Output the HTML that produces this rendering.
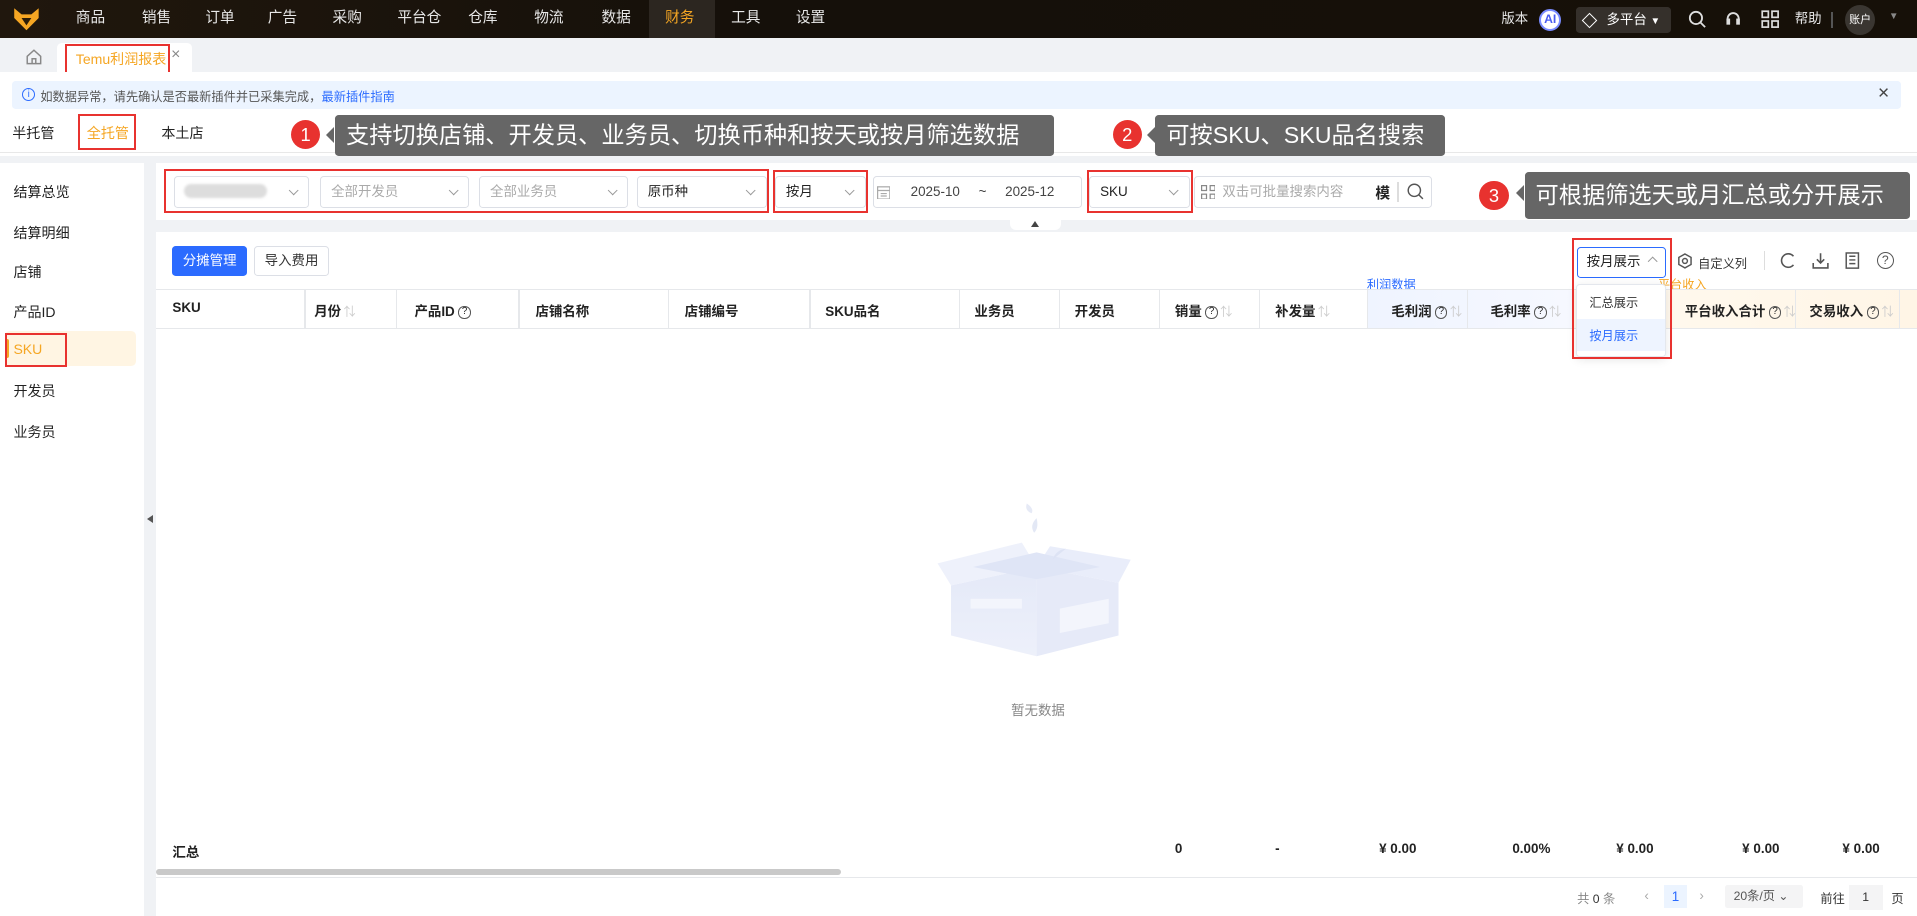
<!DOCTYPE html>
<html><head><meta charset="utf-8"><style>
*{box-sizing:border-box;margin:0;padding:0}
html,body{width:1917px;height:916px;overflow:hidden;background:#f0f2f5}
body{font-family:"Liberation Sans","Noto Sans CJK SC",sans-serif;color:#333}
#w{position:absolute;left:0;top:0;width:1568px;height:749px;zoom:1.22258;background:#f0f2f5;overflow:hidden}
.a{position:absolute;white-space:nowrap}
.nav{left:0;top:0;width:1568px;height:31px;background:linear-gradient(90deg,#20170d,#15100a 40%,#161008)}
.ni{top:0;height:31px;line-height:31px;font-size:12px;color:#e8e8e8}
.sel{height:26px;border:1px solid #dcdfe6;border-radius:3px;background:#fff;font-size:11px;line-height:24px;padding-left:8px;color:#aaa}
.sel .ch{position:absolute;right:9px;top:8px;width:6px;height:6px;border-right:1px solid #999;border-bottom:1px solid #999;transform:rotate(45deg)}
.rb{border:2px solid #e8322f}
.side{font-size:11.5px;color:#222;left:11px}
.th{font-size:11px;font-weight:bold;color:#222;top:245px}
.q{display:inline-block;width:10px;height:10px;border:1px solid #555;border-radius:50%;font-size:8px;line-height:8px;text-align:center;font-weight:normal;vertical-align:1px;margin-left:3px}
.so{color:#ccc;font-weight:normal;font-size:10px;margin-left:2px}
.vl{top:237px;width:1px;height:32px;background:#e6e8eb}
.tip{background:#666;color:#fff;font-size:19px;line-height:34px;padding-left:9px;border-radius:3px}
.tip:before{content:"";position:absolute;left:-7px;top:10px;border-right:7px solid #666;border-top:7px solid transparent;border-bottom:7px solid transparent}
.num{width:24px;height:24px;border-radius:50%;background:#e8322f;color:#fff;font-size:15px;text-align:center;line-height:24px}
.sum{top:688px;font-size:11px;font-weight:bold;color:#222}
</style></head><body><div id="w">
<div class="a nav"></div>
<svg class="a" style="left:11px;top:6px" width="22" height="20" viewBox="0 0 22 20"><path d="M1 1 L7 6 L15 6 L21 1 L21 9 L11 19 L1 9Z" fill="#f5a623"/><path d="M7 9 L11 15 L15 9Z" fill="#2a1c08"/></svg>
<div class="a ni" style="left:62px">商品</div><div class="a ni" style="left:116px">销售</div><div class="a ni" style="left:168px">订单</div><div class="a ni" style="left:219px">广告</div><div class="a ni" style="left:272px">采购</div><div class="a ni" style="left:325px">平台仓</div><div class="a ni" style="left:383px">仓库</div><div class="a ni" style="left:437px">物流</div><div class="a ni" style="left:492px">数据</div>
<div class="a" style="left:531px;top:0;width:54px;height:31px;background:#2c2620"></div>
<div class="a ni" style="left:544px;color:#f5a623">财务</div><div class="a ni" style="left:598px">工具</div><div class="a ni" style="left:651px">设置</div>
<div class="a ni" style="left:1228px;font-size:11px">版本</div>
<div class="a" style="left:1259px;top:7px;width:18px;height:18px;border-radius:50%;background:#fff;border:2px solid #7a8cff;font-size:10px;font-weight:bold;color:#4a5cf0;text-align:center;line-height:14px">AI</div>
<div class="a" style="left:1289px;top:6px;width:78px;height:21px;background:#35302b;border-radius:3px;color:#fff;font-size:11px;line-height:21px;padding-left:25px">多平台 <span style="font-size:8px">▼</span></div>
<div class="a" style="left:1296px;top:12px;width:9px;height:9px;border:1.5px solid #fff;transform:rotate(45deg)"></div>
<svg class="a" style="left:1381px;top:8px" width="15" height="15"><circle cx="6.5" cy="6.5" r="5" stroke="#ddd" stroke-width="1.5" fill="none"/><path d="M10 10 L14 14" stroke="#ddd" stroke-width="1.5"/></svg>
<svg class="a" style="left:1410px;top:8px" width="15" height="15"><path d="M3 9 V7 A4.5 4.5 0 0 1 12 7 V9" stroke="#ddd" stroke-width="1.5" fill="none"/><rect x="2" y="7" width="3" height="5" fill="#ddd"/><rect x="10" y="7" width="3" height="5" fill="#ddd"/></svg>
<svg class="a" style="left:1440px;top:8px" width="15" height="15" fill="none" stroke="#ddd" stroke-width="1.4"><rect x="1" y="1" width="5" height="5"/><rect x="9" y="1" width="5" height="5"/><rect x="1" y="9" width="5" height="5"/><rect x="9" y="9" width="5" height="5"/></svg>
<div class="a ni" style="left:1468px;font-size:11px">帮助</div>
<div class="a" style="left:1498px;top:10px;width:1px;height:13px;background:#555"></div>
<div class="a" style="left:1509px;top:4px;width:25px;height:25px;border-radius:50%;background:#3a3631;color:#fff;font-size:9px;text-align:center;line-height:25px">账户</div>
<div class="a" style="left:1545px;top:9px;color:#888;font-size:8px">▼</div>
<div class="a" style="left:0;top:31px;width:1568px;height:28px;background:#f0f2f5"></div>
<svg class="a" style="left:21px;top:40px" width="13" height="13" fill="none" stroke="#888" stroke-width="1.2"><path d="M1 6 L6.5 1 L12 6 V12 H1Z"/><path d="M5 12 V8 H8 V12"/></svg>
<div class="a" style="left:47px;top:35px;width:110px;height:24px;background:#fff;border-radius:4px 4px 0 0"></div>
<div class="a" style="left:62px;top:40px;font-size:11.5px;color:#f5a623">Temu利润报表</div>
<div class="a" style="left:140px;top:38px;font-size:13px;color:#888">×</div>
<div class="a rb" style="left:53px;top:36px;width:86px;height:25px"></div>
<div class="a" style="left:0;top:59px;width:1568px;height:69px;background:#fff"></div>
<div class="a" style="left:10px;top:66px;width:1545px;height:23px;background:#ecf4ff;border-radius:3px"></div>
<div class="a" style="left:18px;top:72px;width:11px;height:11px;border:1px solid #2b6bff;border-radius:50%;font-size:8px;color:#2b6bff;text-align:center;line-height:9px">i</div>
<div class="a" style="left:33px;top:71px;font-size:10px;color:#555">如数据异常，请先确认是否最新插件并已采集完成，</div>
<div class="a" style="left:263px;top:71px;font-size:10px;color:#2b6bff">最新插件指南</div>
<div class="a" style="left:1536px;top:67px;font-size:16px;color:#444">×</div>
<div class="a" style="left:10px;top:101px;font-size:11.5px;color:#222">半托管</div>
<div class="a" style="left:71px;top:101px;font-size:11.5px;color:#f5a623">全托管</div>
<div class="a" style="left:70px;top:121px;width:36px;height:2px;background:#f5a623"></div>
<div class="a" style="left:132px;top:101px;font-size:11.5px;color:#222">本土店</div>
<div class="a rb" style="left:64px;top:93px;width:47px;height:30px"></div>
<div class="a" style="left:0;top:124px;width:1568px;height:1px;background:#e8e8e8"></div>
<div class="a" style="left:0;top:133px;width:118px;height:616px;background:#fff"></div>
<div class="a side" style="top:149px">结算总览</div><div class="a side" style="top:182px">结算明细</div><div class="a side" style="top:214px">店铺</div><div class="a side" style="top:247px">产品ID</div>
<div class="a" style="left:4px;top:271px;width:107px;height:28px;background:#fff5e3;border-radius:4px"></div>
<div class="a" style="left:4px;top:277px;width:3px;height:16px;background:#f5a623;border-radius:2px"></div>
<div class="a side" style="top:279px;color:#f5a623">SKU</div>
<div class="a rb" style="left:4px;top:272px;width:51px;height:28px"></div>
<div class="a side" style="top:312px">开发员</div><div class="a side" style="top:345px">业务员</div>
<div class="a" style="left:118px;top:405px;width:10px;height:44px;background:#f0f2f5"></div>
<div class="a" style="left:120px;top:421px;border-right:5px solid #555;border-top:4px solid transparent;border-bottom:4px solid transparent"></div>
<div class="a" style="left:128px;top:133px;width:1440px;height:47px;background:#fff"></div>
<div class="a sel" style="left:142px;top:144px;width:111px"><span style="display:inline-block;width:68px;height:12px;background:#ddd;vertical-align:-2px;filter:blur(1px);border-radius:6px"></span><i class="ch"></i></div>
<div class="a sel" style="left:262px;top:144px;width:122px">全部开发员<i class="ch"></i></div>
<div class="a sel" style="left:392px;top:144px;width:122px">全部业务员<i class="ch"></i></div>
<div class="a sel" style="left:521px;top:144px;width:106px;color:#222">原币种<i class="ch"></i></div>
<div class="a sel" style="left:634px;top:144px;width:74px;color:#222">按月<i class="ch"></i></div>
<div class="a sel" style="left:714px;top:144px;width:171px;color:#444;padding-left:30px">2025-10 &nbsp;&nbsp;&nbsp;&nbsp;~&nbsp;&nbsp;&nbsp;&nbsp; 2025-12</div>
<svg class="a" style="left:717px;top:151px" width="11" height="12" fill="none" stroke="#aaa"><rect x="0.5" y="1.5" width="10" height="10"/><path d="M0.5 4.5 H10.5 M3 7 H8 M3 9 H8"/></svg>
<div class="a sel" style="left:891px;top:144px;width:82px;color:#222">SKU<i class="ch"></i></div>
<div class="a sel" style="left:977px;top:144px;width:194px;padding-left:22px">双击可批量搜索内容</div>
<svg class="a" style="left:982px;top:151px" width="12" height="12" fill="none" stroke="#888"><rect x="0.5" y="0.5" width="4" height="4"/><rect x="7.5" y="0.5" width="4" height="4"/><rect x="0.5" y="7.5" width="4" height="4"/><rect x="7.5" y="7.5" width="4" height="4"/></svg>
<div class="a" style="left:1125px;top:149px;font-size:12px;font-weight:bold;color:#222">模</div>
<div class="a" style="left:1143px;top:149px;width:1px;height:16px;background:#ddd"></div>
<svg class="a" style="left:1151px;top:150px" width="14" height="14" fill="none" stroke="#555" stroke-width="1.2"><circle cx="6" cy="6" r="5"/><path d="M9.5 9.5 L13 13"/></svg>
<div class="a rb" style="left:134px;top:138px;width:495px;height:36px"></div>
<div class="a rb" style="left:632px;top:139px;width:78px;height:35px"></div>
<div class="a rb" style="left:889px;top:139px;width:87px;height:35px"></div>
<div class="a" style="left:826px;top:179px;width:42px;height:9px;background:#fff;border-radius:0 0 5px 5px"></div>
<div class="a" style="left:843px;top:181px;border-bottom:5px solid #444;border-left:4px solid transparent;border-right:4px solid transparent"></div>
<div class="a" style="left:128px;top:190px;width:1440px;height:559px;background:#fff"></div>
<div class="a" style="left:141px;top:201px;width:61px;height:25px;background:#2b6bff;border-radius:3px;color:#fff;font-size:11px;text-align:center;line-height:25px">分摊管理</div>
<div class="a" style="left:208px;top:201px;width:61px;height:25px;border:1px solid #dcdfe6;border-radius:3px;color:#333;font-size:11px;text-align:center;line-height:23px">导入费用</div>
<div class="a" style="left:1290px;top:202px;width:73px;height:25px;border:1px solid #2b6bff;border-radius:3px;font-size:11px;line-height:23px;padding-left:7px;color:#222">按月展示</div>
<div class="a" style="left:1349px;top:211px;width:6px;height:6px;border-left:1px solid #999;border-top:1px solid #999;transform:rotate(45deg)"></div>
<svg class="a" style="left:1372px;top:207px" width="13" height="13" fill="none" stroke="#555" stroke-width="1.2"><path d="M6.5 0.8 L11.5 3.6 V9.4 L6.5 12.2 L1.5 9.4 V3.6Z"/><circle cx="6.5" cy="6.5" r="2"/></svg>
<div class="a" style="left:1389px;top:208px;font-size:10px;color:#333">自定义列</div>
<div class="a" style="left:1443px;top:205px;width:1px;height:16px;background:#ddd"></div>
<svg class="a" style="left:1456px;top:206px" width="13" height="14" fill="none" stroke="#555" stroke-width="1.3"><path d="M11 3.5 A5.5 5.5 0 1 0 11 10.5"/></svg>
<svg class="a" style="left:1482px;top:206px" width="14" height="14" fill="none" stroke="#555" stroke-width="1.3"><path d="M7 1 V9 M4 6 L7 9 L10 6 M1 9 V13 H13 V9"/></svg>
<svg class="a" style="left:1509px;top:206px" width="12" height="14" fill="none" stroke="#555" stroke-width="1.2"><rect x="1" y="0.8" width="10" height="12.4"/><path d="M3.5 3.5 H8.5 M3.5 6.5 H8.5 M3.5 9.5 H8.5"/></svg>
<div class="a" style="left:1535px;top:206px;width:14px;height:14px;border:1.3px solid #555;border-radius:50%;font-size:10px;text-align:center;line-height:12px;color:#555">?</div>
<div class="a" style="left:1118px;top:225px;font-size:10px;color:#2b6bff">利润数据</div>
<div class="a" style="left:1356px;top:225px;font-size:10px;color:#f5a623">平台收入</div>
<div class="a" style="left:128px;top:236px;width:1440px;height:1px;background:#e6e8eb"></div>
<div class="a" style="left:1118px;top:237px;width:168px;height:32px;background:linear-gradient(90deg,#eff4ff,#f6f8ff)"></div>
<div class="a" style="left:1286px;top:237px;width:282px;height:32px;background:linear-gradient(90deg,#fffaf0,#fff5e6)"></div>
<div class="a" style="left:128px;top:268px;width:1440px;height:1px;background:#e6e8eb"></div>
<div class="a vl" style="left:249px"></div><div class="a vl" style="left:324px"></div><div class="a vl" style="left:424px"></div><div class="a vl" style="left:546px"></div><div class="a vl" style="left:662px"></div><div class="a vl" style="left:784px"></div><div class="a vl" style="left:866px"></div><div class="a vl" style="left:948px"></div><div class="a vl" style="left:1030px"></div><div class="a vl" style="left:1118px"></div><div class="a vl" style="left:1200px"></div><div class="a vl" style="left:1468px"></div><div class="a vl" style="left:1553px"></div>
<div class="a th" style="left:141px">SKU</div>
<div class="a th" style="left:257px">月份<span class="so">⇅</span></div>
<div class="a th" style="left:339px">产品ID<span class="q">?</span></div>
<div class="a th" style="left:438px">店铺名称</div>
<div class="a th" style="left:560px">店铺编号</div>
<div class="a th" style="left:675px">SKU品名</div>
<div class="a th" style="left:797px">业务员</div>
<div class="a th" style="left:879px">开发员</div>
<div class="a th" style="left:961px">销量<span class="q">?</span><span class="so">⇅</span></div>
<div class="a th" style="left:1043px">补发量<span class="so">⇅</span></div>
<div class="a th" style="left:1138px">毛利润<span class="q">?</span><span class="so">⇅</span></div>
<div class="a th" style="left:1219px">毛利率<span class="q">?</span><span class="so">⇅</span></div>
<div class="a th" style="left:1378px">平台收入合计<span class="q">?</span><span class="so">⇅</span></div>
<div class="a th" style="left:1480px">交易收入<span class="q">?</span><span class="so">⇅</span></div>
<div class="a" style="left:1289px;top:232px;width:74px;height:60px;background:#fff;border:1px solid #e4e7ed;border-radius:3px;box-shadow:0 2px 8px rgba(0,0,0,.1)"></div>
<div class="a" style="left:1300px;top:240px;font-size:10px;color:#333">汇总展示</div>
<div class="a" style="left:1290px;top:261px;width:72px;height:26px;background:#eef4ff"></div>
<div class="a" style="left:1300px;top:267px;font-size:10px;color:#2b6bff">按月展示</div>
<div class="a rb" style="left:1286px;top:195px;width:82px;height:99px"></div>
<svg class="a" style="left:760px;top:392px" width="180" height="160" viewBox="0 0 180 160">
<defs><linearGradient id="g" x1="0" y1="0" x2="0" y2="1"><stop offset="0" stop-color="#e4e9f8"/><stop offset="1" stop-color="#edf0fa"/></linearGradient></defs>
<path d="M18 87 L88 72 L88 145 L18 128Z" fill="url(#g)"/>
<path d="M88 72 L155 85 L155 128 L88 145Z" fill="#e6eaf8"/>
<path d="M18 87 L7 69 L76 52 L88 72Z" fill="#eef1fb"/>
<path d="M88 72 L99 55 L165 66 L155 85Z" fill="#e9edfa"/>
<path d="M36 72 L88 60 L140 72 L88 82Z" fill="#dfe5f6"/>
<rect x="34" y="98" width="42" height="8" fill="#f3f5fc"/>
<path d="M107 106 L147 98 L147 118 L107 126Z" fill="#f3f5fc"/>
<path d="M101 66 Q104 58 112 57 Q106 62 101 66Z" fill="#dde3f4"/>
<path d="M88 32 Q90 40 86 44 Q82 38 88 32Z" fill="#e3e8f5"/>
<path d="M80 20 Q86 24 84 28 Q78 26 80 20Z" fill="#e6eaf6"/>
</svg>
<div class="a" style="left:827px;top:572px;font-size:11px;color:#888">暂无数据</div>
<div class="a sum" style="left:141px">汇总</div>
<div class="a sum" style="left:961px">0</div>
<div class="a sum" style="left:1043px">-</div>
<div class="a sum" style="left:1128px">¥ 0.00</div>
<div class="a sum" style="left:1237px">0.00%</div>
<div class="a sum" style="left:1322px">¥ 0.00</div>
<div class="a sum" style="left:1425px">¥ 0.00</div>
<div class="a sum" style="left:1507px">¥ 0.00</div>
<div class="a" style="left:128px;top:711px;width:560px;height:5px;background:#c9c9c9;border-radius:3px"></div>
<div class="a" style="left:128px;top:717px;width:1440px;height:1px;background:#e6e8eb"></div>
<div class="a" style="left:1290px;top:727px;font-size:10px;color:#888">共 <b style="color:#333;font-weight:normal">0</b> 条</div>
<div class="a" style="left:1345px;top:726px;font-size:11px;color:#aaa">‹</div>
<div class="a" style="left:1361px;top:724px;width:19px;height:19px;background:#ecf4ff;color:#2b6bff;font-size:11px;text-align:center;line-height:19px">1</div>
<div class="a" style="left:1390px;top:726px;font-size:11px;color:#aaa">›</div>
<div class="a" style="left:1411px;top:724px;width:64px;height:19px;background:#f4f4f5;border-radius:2px;font-size:10px;color:#555;line-height:19px;padding-left:7px">20条/页 ⌄</div>
<div class="a" style="left:1489px;top:727px;font-size:10px;color:#333">前往</div>
<div class="a" style="left:1512px;top:724px;width:28px;height:20px;background:#f4f4f5;font-size:10px;text-align:center;line-height:20px">1</div>
<div class="a" style="left:1547px;top:727px;font-size:10px;color:#333">页</div>
<div class="a num" style="left:238px;top:98px">1</div>
<div class="a tip" style="left:274px;top:94px;width:588px;height:34px">支持切换店铺、开发员、业务员、切换币种和按天或按月筛选数据</div>
<div class="a num" style="left:910px;top:98px">2</div>
<div class="a tip" style="left:945px;top:94px;width:237px;height:34px">可按SKU、SKU品名搜索</div>
<div class="a num" style="left:1210px;top:148px">3</div>
<div class="a tip" style="left:1247px;top:141px;width:315px;height:38px;line-height:38px">可根据筛选天或月汇总或分开展示</div>
</div></body></html>
